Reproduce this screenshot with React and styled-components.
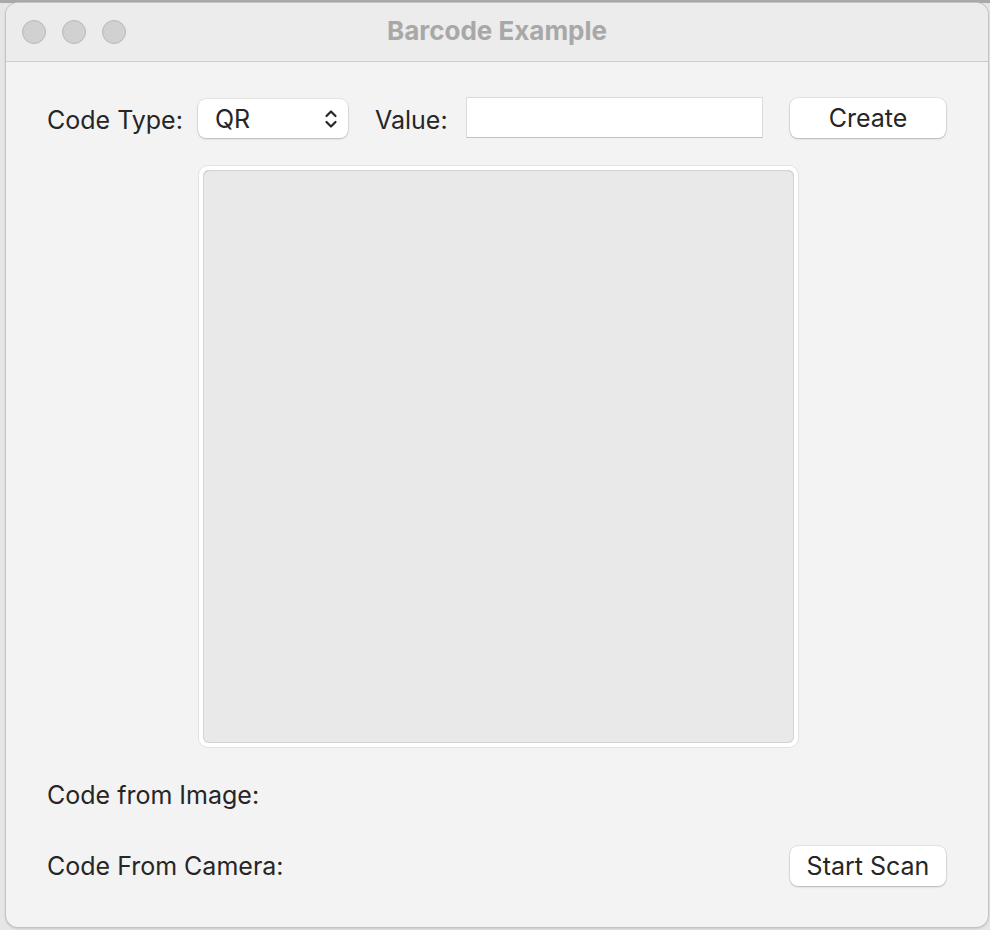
import React from 'react';
import styled, { createGlobalStyle } from 'styled-components';

const Global = createGlobalStyle`
  html, body {
    margin: 0;
    padding: 0;
    background: #e4e4e4;
    font-family: Inter, "Noto Sans", sans-serif;
  }
`

const Desktop = styled.div`
  width: 990px;
  height: 930px;
  box-sizing: border-box;
  padding: 3px 2px 3px 6px;
  background: linear-gradient(#a9a9a9 0 3px, #e6e6e6 3px);
`

const Window = styled.div`
  width: 982px;
  height: 924px;
  display: flex;
  flex-direction: column;
  background: #f3f3f3;
  border-radius: 12px;
  overflow: hidden;
  box-shadow: 0 0 0 1px #c4c4c4, 0 1px 3px rgba(0, 0, 0, 0.25);
`

const TitleBar = styled.div`
  height: 58px;
  flex-shrink: 0;
  display: flex;
  align-items: center;
  position: relative;
  background: #ececec;
  border-bottom: 1px solid #cbcbcb;
  padding-left: 16px;
  gap: 16px;
`

const Light = styled.span`
  width: 22px;
  height: 22px;
  border-radius: 50%;
  background: #d1d1d1;
  border: 1px solid #b9b9b9;
`

const Title = styled.div`
  position: absolute;
  left: 0;
  right: 0;
  top: 0;
  bottom: 4px;
  display: flex;
  align-items: center;
  justify-content: center;
  font-size: 26px;
  font-weight: 700;
  color: #a8a8a8;
  pointer-events: none;
`

const Content = styled.div`
  flex: 1;
  display: flex;
  flex-direction: column;
  padding: 35px 42px 40px 41px;
  color: #262626;
  font-size: 25px;
`

const Row = styled.div`
  display: flex;
  align-items: center;
  height: ${p => p.h || 41}px;
  margin-top: ${p => p.top || 0}px;
`

const Label = styled.span`
  width: ${p => (p.w ? `${p.w}px` : 'auto')};
  flex-shrink: 0;
  padding-top: ${p => p.drop || 0}px;
  white-space: nowrap;
`

const Select = styled.div`
  width: 150px;
  height: 39px;
  box-sizing: border-box;
  display: flex;
  align-items: center;
  justify-content: space-between;
  padding: 0 10px 0 17px;
  margin-top: 2px;
  background: #fff;
  border-radius: 8px;
  box-shadow: 0 0 0 0.5px rgba(0, 0, 0, 0.12), 0 1px 2px rgba(0, 0, 0, 0.2);
  margin-right: 27px;
`

const Input = styled.div`
  width: 297px;
  height: 41px;
  box-sizing: border-box;
  background: #fff;
  border: 1px solid #dadada;
  border-bottom-color: #c2c2c2;
  margin-right: 27px;
`

const Button = styled.button`
  width: 156px;
  height: 40px;
  margin-left: ${p => (p.push ? 'auto' : '0')};
  background: #fff;
  border: none;
  border-radius: 8px;
  box-shadow: 0 0 0 0.5px rgba(0, 0, 0, 0.12), 0 1px 2px rgba(0, 0, 0, 0.22);
  font-family: inherit;
  font-size: 25px;
  color: #262626;
  padding: 0;
`

const Well = styled.div`
  align-self: center;
  width: 601px;
  height: 583px;
  box-sizing: border-box;
  margin: 27px 0 0 4px;
  padding: 4px;
  background: #fff;
  border: 1px solid #e2e2e2;
  border-radius: 10px;
`

const WellInner = styled.div`
  height: 100%;
  background: #e9e9e9;
  border-radius: 6px;
  box-shadow: inset 0 0 0 1px #d4d4d4, inset 0 1px 1px rgba(0, 0, 0, 0.15);
`

const Chevrons = () => (
  <svg width="14" height="22" viewBox="0 0 14 22" fill="none" stroke="#262626" strokeWidth="2.2" strokeLinecap="round" strokeLinejoin="round">
    <path d="M2.5 8 L7 3.5 L11.5 8" />
    <path d="M2.5 14 L7 18.5 L11.5 14" />
  </svg>
)

export default function App() {
  return (
    <Desktop>
      <Global />
      <Window>
        <TitleBar>
          <Light />
          <Light />
          <Light />
          <Title>Barcode Example</Title>
        </TitleBar>
        <Content>
          <Row>
            <Label w={151} drop={4}>Code Type:</Label>
            <Select>
              <span>QR</span>
              <Chevrons />
            </Select>
            <Label w={91} drop={4}>Value:</Label>
            <Input />
            <Button>Create</Button>
          </Row>
          <Well>
            <WellInner />
          </Well>
          <Row h={40} top={27}>
            <Label>Code from Image:</Label>
          </Row>
          <Row h={40} top={31}>
            <Label>Code From Camera:</Label>
            <Button push>Start Scan</Button>
          </Row>
        </Content>
      </Window>
    </Desktop>
  );
}
